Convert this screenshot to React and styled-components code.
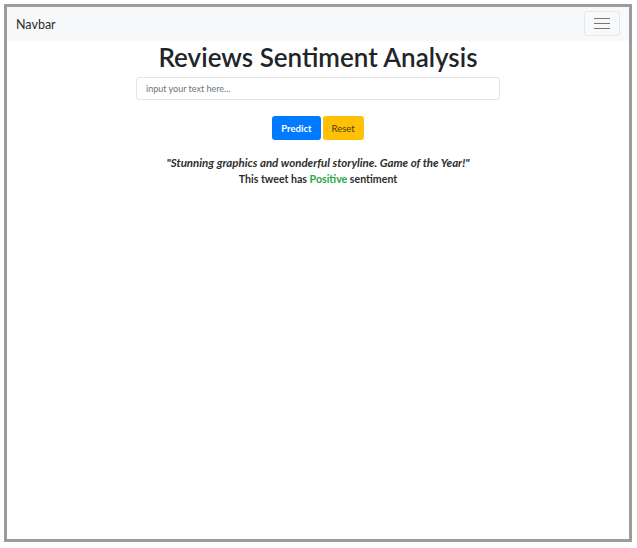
import React from 'react'
import styled, { createGlobalStyle } from 'styled-components'

const GlobalStyle = createGlobalStyle`
  body {
    margin: 0;
    background: #ffffff;
    font-family: Lato, "Open Sans", sans-serif;
    color: #212529;
  }
`

const Frame = styled.div`
  box-sizing: border-box;
  margin: 4px;
  width: 628px;
  height: 538px;
  border: 3px solid #9c9c9c;
  background: #ffffff;
`

const Navbar = styled.nav`
  display: flex;
  align-items: center;
  justify-content: space-between;
  height: 34px;
  padding: 0 9px;
  background: #f8f9fa;
`

const Brand = styled.span`
  font-size: 12.5px;
  color: #2b2b2b;
`

const Toggler = styled.button`
  display: flex;
  flex-direction: column;
  justify-content: center;
  align-items: center;
  gap: 4px;
  box-sizing: border-box;
  width: 36px;
  height: 25px;
  margin-top: -2px;
  padding: 0;
  background: transparent;
  border: 1px solid #e6e7e8;
  border-radius: 3px;
`

const Bar = styled.span`
  display: block;
  width: 16px;
  height: 1px;
  background: #777;
`

const Main = styled.main`
  display: flex;
  flex-direction: column;
  align-items: center;
`

const Title = styled.h1`
  margin: 0;
  font-size: 26px;
  font-weight: 600;
  line-height: 32px;
  color: #212529;
`

const Input = styled.input`
  box-sizing: border-box;
  width: 364px;
  height: 23px;
  margin-top: 4px;
  padding: 0 9px;
  font-family: inherit;
  font-size: 9px;
  border: 1px solid #e3e5e8;
  border-radius: 3px;
  outline: none;
  &::placeholder {
    color: #6c757d;
  }
`

const Buttons = styled.div`
  display: flex;
  gap: 2px;
  margin-top: 16px;
`

const Button = styled.button`
  box-sizing: border-box;
  height: 24px;
  padding: 0 ${p => p.pad}px;
  font-family: inherit;
  font-size: 9.5px;
  font-weight: ${p => (p.primary ? 700 : 400)};
  color: ${p => (p.primary ? '#ffffff' : '#4a3a00')};
  background: ${p => (p.primary ? '#007bff' : '#ffc107')};
  border: none;
  border-radius: 3px;
`

const Result = styled.div`
  margin-top: 15px;
  text-align: center;
  line-height: 16px;
  font-weight: 700;
  color: #2e2e2e;
`

const Quote = styled.div`
  font-size: 11.5px;
  font-style: italic;
`

const Verdict = styled.div`
  font-size: 10.6px;
`

const Positive = styled.span`
  color: #28a745;
`

const App = () => {
  return (
    <>
      <GlobalStyle />
      <Frame>
        <Navbar>
          <Brand>Navbar</Brand>
          <Toggler aria-label="Toggle navigation">
            <Bar />
            <Bar />
            <Bar />
          </Toggler>
        </Navbar>
        <Main>
          <Title>Reviews Sentiment Analysis</Title>
          <Input placeholder="input your text here..." />
          <Buttons>
            <Button primary pad={9}>Predict</Button>
            <Button pad={9}>Reset</Button>
          </Buttons>
          <Result>
            <Quote>"Stunning graphics and wonderful storyline. Game of the Year!"</Quote>
            <Verdict>This tweet has <Positive>Positive</Positive> sentiment</Verdict>
          </Result>
        </Main>
      </Frame>
    </>
  )
}

export default App
